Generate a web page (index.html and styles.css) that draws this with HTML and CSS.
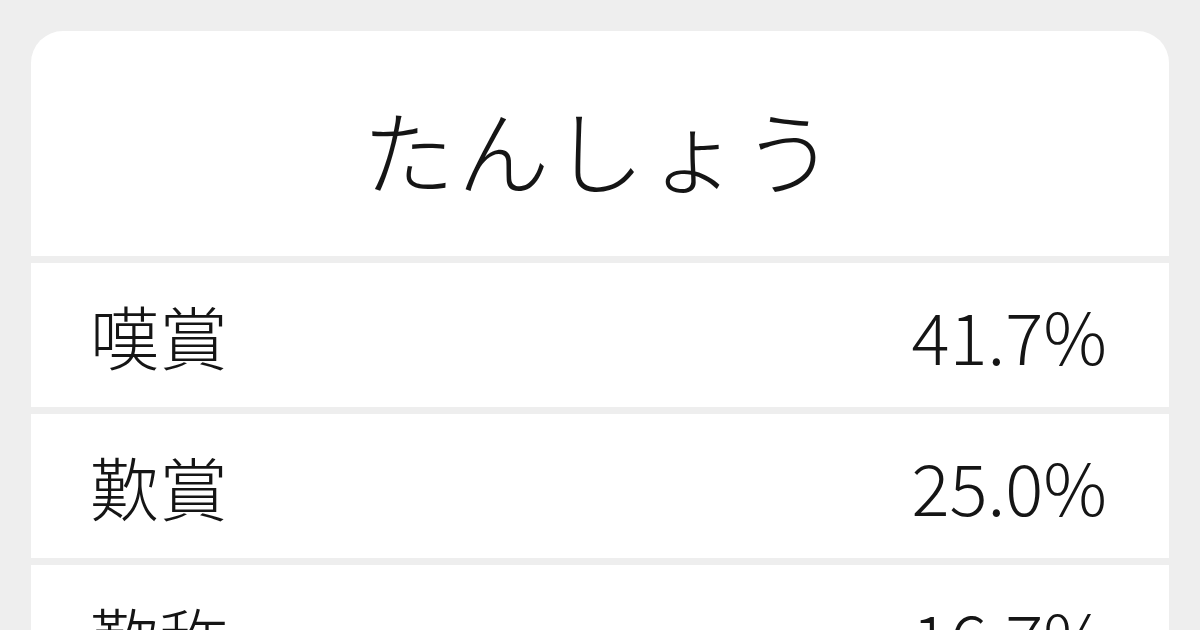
FILE: index.html
```html
<!DOCTYPE html>
<html>
<head>
<meta charset="utf-8">
<meta name="viewport" content="width=device-width, initial-scale=1.0">
<title>たんしょう</title>
<link rel="stylesheet" href="styles.css">
</head>
<body class="body">

<div class="card">
	<div class="head">
		<h1 class="reading">たんしょう</h1>
	</div>
	<ul class="list">
		<li class="row"><span class="word">嘆賞</span><span class="rate">41.7%</span></li>
		<li class="row"><span class="word">歎賞</span><span class="rate">25.0%</span></li>
		<li class="row"><span class="word">歎称</span><span class="rate">16.7%</span></li>
		<li class="row"><span class="word">嘆称</span><span class="rate">16.7%</span></li>
	</ul>
</div>

</body>
</html>
```

FILE: styles.css
```css
html,
body {
	margin: 0;
	background: #eeeeee;
	font-family: "Noto Sans CJK JP", "Noto Sans", sans-serif;
	color: #151515;
}

.body {
	padding: 31px;
	height: 630px;
	box-sizing: border-box;
	overflow: hidden;
}

.card {
	border-radius: 32px 32px 0 0;
	overflow: hidden;
	display: flex;
	flex-direction: column;
	gap: 7px;
}

.head {
	background: #fff;
	height: 225px;
	display: flex;
	align-items: center;
	justify-content: center;
}

.reading {
	margin: 0;
	font-size: 92px;
	font-weight: 300;
	letter-spacing: 3px;
	line-height: 1;
	padding-top: 8px;
}

.list {
	list-style: none;
	margin: 0;
	padding: 0;
	display: flex;
	flex-direction: column;
	gap: 7px;
}

.row {
	background: #fff;
	height: 144px;
	padding: 0 62px 0 59px;
	display: flex;
	align-items: center;
	justify-content: space-between;
	font-size: 69px;
	font-weight: 300;
	line-height: 1;
}

.rate {
	font-size: 71px;
	margin-top: -2px;
}
```
